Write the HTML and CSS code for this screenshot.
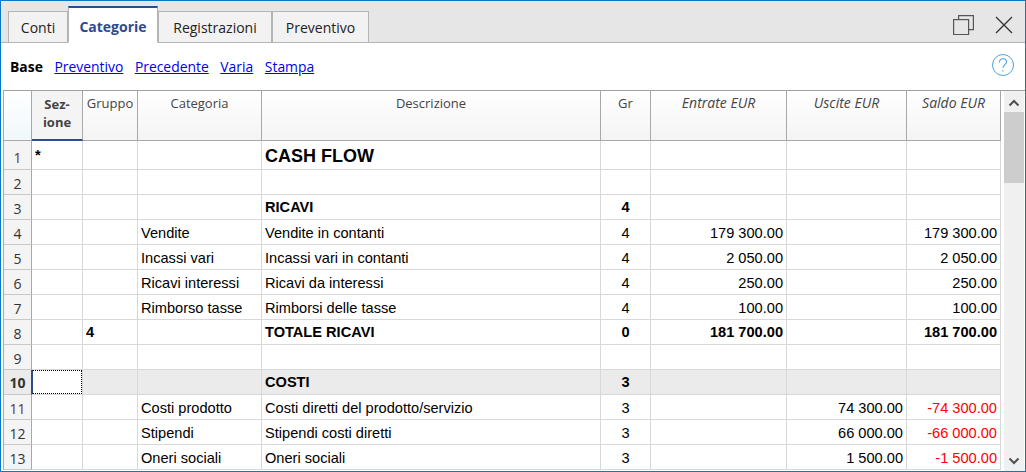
FILE: index.html
```html
<!DOCTYPE html>
<html lang="it">
<head>
  <meta charset="UTF-8">
  <title>Categorie</title>
  <link rel="stylesheet" href="styles.css">
</head>
<body>
  <div class="window">
    <div class="tabbar">
      <div class="tabs">
        <div class="tab">Conti</div>
        <div class="tab active">Categorie</div>
        <div class="tab">Registrazioni</div>
        <div class="tab">Preventivo</div>
      </div>
      <div class="win-icons">
        <svg width="21" height="20" viewBox="0 0 21 20" fill="none" stroke="#555" stroke-width="1.2">
          <rect x="0.6" y="4.6" width="15" height="15"/>
          <path d="M5.6 4.6V0.6H20.4V14.6H15.6"/>
        </svg>
        <svg width="18" height="18" viewBox="0 0 18 18" fill="none" stroke="#333" stroke-width="1.3">
          <path d="M1 1L17 17M17 1L1 17"/>
        </svg>
      </div>
    </div>

    <div class="subnav">
      <b class="subnav-current">Base</b>
      <a href="#">Preventivo</a>
      <a href="#">Precedente</a>
      <a href="#">Varia</a>
      <a href="#">Stampa</a>
      <svg class="help" width="24" height="24" viewBox="0 0 24 24" fill="none" stroke="#4ea6dc">
        <circle cx="12" cy="12" r="10.5"/>
        <path d="M8.5 9.5C8.5 7 10 5.8 12 5.8C14 5.8 15.5 7 15.5 9C15.5 11.5 12 11.8 12 14.8" stroke-width="1.1"/>
        <path d="M12 17V18.5" stroke-width="1.1"/>
      </svg>
    </div>

    <div class="grid-wrap">
      <table class="grid">
        <colgroup>
          <col class="c-row"><col class="c-sez"><col class="c-gru"><col class="c-cat"><col class="c-des"><col class="c-gr"><col class="c-ent"><col class="c-usc"><col class="c-sal">
        </colgroup>
        <thead>
          <tr>
            <th class="corner"></th>
            <th class="sel-col">Sez-<br>ione</th>
            <th>Gruppo</th>
            <th>Categoria</th>
            <th>Descrizione</th>
            <th>Gr</th>
            <th class="it">Entrate EUR</th>
            <th class="it">Uscite EUR</th>
            <th class="it">Saldo EUR</th>
          </tr>
        </thead>
        <tbody>
          <tr class="tall"><td class="rn pink">1</td><td class="b">*</td><td></td><td></td><td class="b title">CASH FLOW</td><td></td><td></td><td></td><td></td></tr>
          <tr><td class="rn">2</td><td></td><td></td><td></td><td></td><td></td><td></td><td></td><td></td></tr>
          <tr><td class="rn">3</td><td></td><td></td><td></td><td class="b">RICAVI</td><td class="ctr b">4</td><td></td><td></td><td></td></tr>
          <tr><td class="rn">4</td><td></td><td></td><td>Vendite</td><td>Vendite in contanti</td><td class="ctr">4</td><td class="num">179 300.00</td><td></td><td class="num">179 300.00</td></tr>
          <tr><td class="rn">5</td><td></td><td></td><td>Incassi vari</td><td>Incassi vari in contanti</td><td class="ctr">4</td><td class="num">2 050.00</td><td></td><td class="num">2 050.00</td></tr>
          <tr><td class="rn">6</td><td></td><td></td><td>Ricavi interessi</td><td>Ricavi da interessi</td><td class="ctr">4</td><td class="num">250.00</td><td></td><td class="num">250.00</td></tr>
          <tr><td class="rn">7</td><td></td><td></td><td>Rimborso tasse</td><td>Rimborsi delle tasse</td><td class="ctr">4</td><td class="num">100.00</td><td></td><td class="num">100.00</td></tr>
          <tr><td class="rn">8</td><td></td><td class="b">4</td><td></td><td class="b">TOTALE RICAVI</td><td class="ctr b">0</td><td class="num b">181 700.00</td><td></td><td class="num b">181 700.00</td></tr>
          <tr><td class="rn">9</td><td></td><td></td><td></td><td></td><td></td><td></td><td></td><td></td></tr>
          <tr class="current"><td class="rn">10</td><td class="cursor"><div class="cursor-box"></div></td><td></td><td></td><td class="b">COSTI</td><td class="ctr b">3</td><td></td><td></td><td></td></tr>
          <tr><td class="rn pink">11</td><td></td><td></td><td>Costi prodotto</td><td>Costi diretti del prodotto/servizio</td><td class="ctr">3</td><td></td><td class="num">74 300.00</td><td class="num neg">-74 300.00</td></tr>
          <tr><td class="rn">12</td><td></td><td></td><td>Stipendi</td><td>Stipendi costi diretti</td><td class="ctr">3</td><td></td><td class="num">66 000.00</td><td class="num neg">-66 000.00</td></tr>
          <tr><td class="rn">13</td><td></td><td></td><td>Oneri sociali</td><td>Oneri sociali</td><td class="ctr">3</td><td></td><td class="num">1 500.00</td><td class="num neg">-1 500.00</td></tr>
        </tbody>
      </table>
      <div class="scrollbar">
        <svg width="12" height="8" viewBox="0 0 12 8" fill="none" stroke="#505050" stroke-width="2"><path d="M1.5 6.5L6 2L10.5 6.5"/></svg>
        <div class="thumb"></div>
        <div class="track"></div>
        <svg width="12" height="8" viewBox="0 0 12 8" fill="none" stroke="#505050" stroke-width="2"><path d="M1.5 1.5L6 6L10.5 1.5"/></svg>
      </div>
    </div>
  </div>
</body>
</html>
```

FILE: styles.css
```css
html, body {
  margin: 0;
  padding: 0;
  height: 100%;
  overflow: hidden;
  background: #fff;
}

.window {
  height: 472px;
  box-sizing: border-box;
  border: 1px solid #0a78c8;
  display: flex;
  flex-direction: column;
  font-family: "Open Sans", "Noto Sans", sans-serif;
  overflow: hidden;
}

.tabbar {
  height: 41px;
  flex: none;
  display: flex;
  justify-content: space-between;
  background: #e6e6e6;
  border-bottom: 1px solid #b4b4b4;
}

.tabs {
  display: flex;
  align-items: flex-end;
  padding-left: 7px;
  margin-bottom: -1px;
}

.tab {
  height: 32px;
  box-sizing: border-box;
  padding-top: 6px;
  line-height: 20px;
  text-align: center;
  background: #f2f2f2;
  border: 1px solid #b4b4b4;
  font-size: 14px;
  color: #222;
}

.tab:nth-child(1) { width: 60px; }
.tab:nth-child(2) { width: 90px; }
.tab:nth-child(3) { width: 114px; }
.tab:nth-child(4) { width: 97px; }

.tab.active {
  height: 37px;
  padding-top: 9px;
  background: #fff;
  border-top: 2px solid #2f4a90;
  border-bottom: 1px solid #fff;
  color: #2f4a90;
  font-weight: 700;
}

.win-icons {
  display: flex;
  align-items: center;
  gap: 21px;
  padding: 7px 12px 0 0;
}

.subnav {
  height: 47px;
  flex: none;
  display: flex;
  align-items: center;
  gap: 11.6px;
  padding: 0 10px 0 9px;
  background: #fff;
  font-size: 13.9px;
}

.subnav-current {
  font-weight: 700;
  color: #000;
}

.subnav a {
  color: #0000ee;
}

.help {
  margin-left: auto;
  margin-bottom: 3px;
}

.grid-wrap {
  flex: 1;
  min-height: 0;
  display: flex;
  margin-left: 2px;
  border-top: 1px solid #a0a0a0;
  overflow: hidden;
}

.grid {
  width: 998px;
  flex: none;
  table-layout: fixed;
  border-collapse: separate;
  border-spacing: 0;
  font-family: "Liberation Sans", Arial, sans-serif;
  font-size: 14.6px;
  color: #000;
  align-self: flex-start;
}

.c-row { width: 29px; }
.c-sez { width: 51px; }
.c-gru { width: 55px; }
.c-cat { width: 124px; }
.c-des { width: 339px; }
.c-gr { width: 50px; }
.c-ent { width: 136px; }
.c-usc { width: 120px; }
.c-sal { width: 94px; }

.grid th {
  height: 50px;
  padding: 3px 1px 0;
  box-sizing: border-box;
  vertical-align: top;
  text-align: center;
  font-family: "Open Sans", "Noto Sans", sans-serif;
  font-size: 13px;
  line-height: 18px;
  font-weight: 400;
  color: #444;
  background: linear-gradient(#fff, #f4f4f4);
  border-right: 1px solid #a8a8a8;
  border-bottom: 1px solid #a8a8a8;
}

.grid th.it {
  font-style: italic;
  font-size: 14px;
}

.grid th.corner {
  background: linear-gradient(#fff, #f0f8fb);
  border-left: 1px solid #a8a8a8;
}

.grid th.sel-col {
  padding-top: 4px;
  font-weight: 700;
  background: #f4f4f4;
  border-bottom: 2px solid #2f4a90;
}

.grid td {
  height: 25px;
  padding: 3px 3px 0;
  box-sizing: border-box;
  vertical-align: top;
  white-space: nowrap;
  overflow: hidden;
  line-height: 21px;
  border-right: 1px solid #d8d8d8;
  border-bottom: 1px solid #d8d8d8;
}

.grid tr.tall td {
  height: 29px;
  padding-top: 4px;
}

.grid td.rn {
  padding: 3px 0 0;
  text-align: center;
  font-family: "Open Sans", "Noto Sans", sans-serif;
  font-size: 14px;
  background: #f4f4f4;
  color: #333;
  border-left: 1px solid #a8a8a8;
  border-right: 1px solid #a8a8a8;
  border-bottom: 1px solid #c8c8c8;
}

.grid tr.tall td.rn {
  padding-top: 6px;
}

.grid td.pink {
  color: #6a2a50;
}

.grid td.b {
  padding-top: 2px;
  font-weight: 700;
}

.grid tr.tall td.title {
  padding-top: 5px;
  font-size: 18px;
}

.grid td.ctr {
  text-align: center;
}

.grid td.num {
  text-align: right;
}

.grid td.neg {
  color: #f00;
}

.grid tr.current td {
  background: #ebebeb;
}

.grid tr.current td.rn {
  padding-top: 2px;
  font-weight: 700;
  border-right-color: #2f4a90;
}

.grid tr.current td.cursor {
  padding: 0;
  background: #fff;
}

.cursor-box {
  height: 24px;
  box-sizing: border-box;
  border: 1px dotted #000;
  border-left: 1px solid #2f4a90;
}

.scrollbar {
  width: 20px;
  margin-left: 3px;
  flex: none;
  display: flex;
  flex-direction: column;
  align-items: center;
  background: #f0f0f0;
  padding: 8px 0 0;
  box-sizing: border-box;
}

.thumb {
  width: 20px;
  height: 71px;
  margin-top: 5px;
  background: #cdcdcd;
}

.track {
  flex: 1;
}

.scrollbar svg:last-child {
  margin-bottom: 6px;
}
```
